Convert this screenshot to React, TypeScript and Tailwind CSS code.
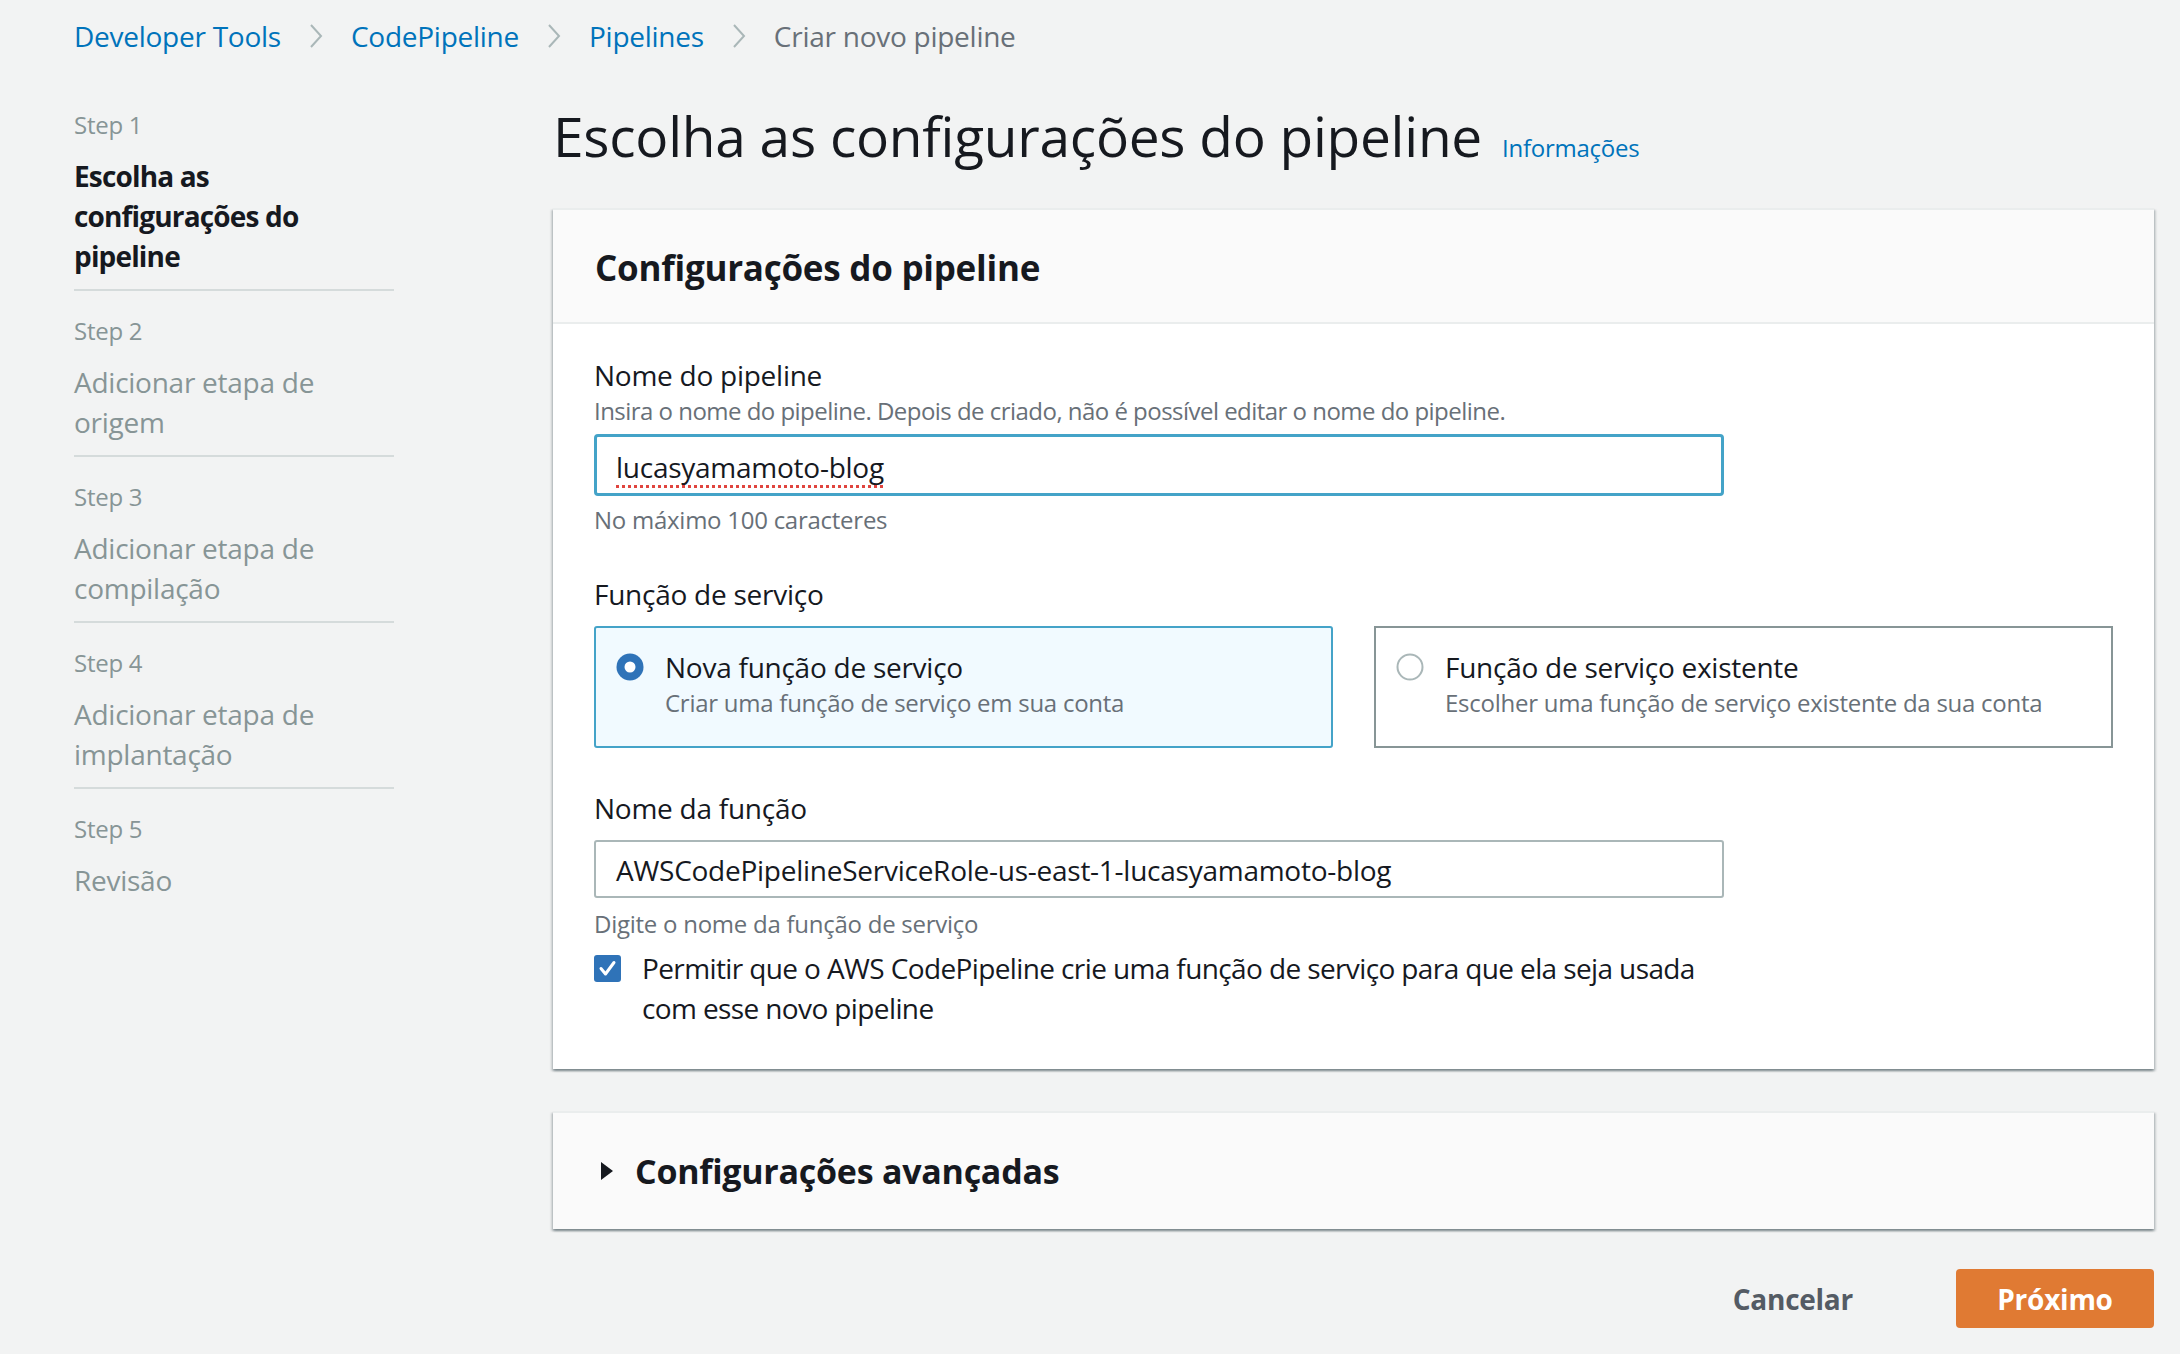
import React from "react";

const FONT = { fontFamily: '"Open Sans", "Noto Sans", Arial, sans-serif' };

function Chevron() {
  return (
    <svg width="16" height="28" viewBox="0 0 16 28" className="shrink-0">
      <path d="M3 3 L13 14 L3 25" fill="none" stroke="#aab7b8" strokeWidth="2" />
    </svg>
  );
}

const steps = [
  { label: "Step 1", title: "Escolha as configurações do pipeline", active: true },
  { label: "Step 2", title: "Adicionar etapa de origem", active: false },
  { label: "Step 3", title: "Adicionar etapa de compilação", active: false },
  { label: "Step 4", title: "Adicionar etapa de implantação", active: false },
  { label: "Step 5", title: "Revisão", active: false },
];

function RadioChecked() {
  return (
    <svg width="28" height="28" viewBox="0 0 28 28" className="shrink-0">
      <circle cx="14" cy="14" r="13.5" fill="#2f73b8" />
      <circle cx="14" cy="14" r="5.5" fill="#ffffff" />
    </svg>
  );
}

function RadioEmpty() {
  return (
    <svg width="28" height="28" viewBox="0 0 28 28" className="shrink-0">
      <circle cx="14" cy="14" r="12.5" fill="#ffffff" stroke="#aab7b8" strokeWidth="2" />
    </svg>
  );
}

function CheckboxChecked() {
  return (
    <svg width="27" height="27" viewBox="0 0 27 27" className="shrink-0">
      <rect x="0" y="0" width="27" height="27" rx="3" fill="#2f73b8" />
      <path d="M7 13.5 L11.5 19 L20 7.5" fill="none" stroke="#ffffff" strokeWidth="3" strokeLinecap="round" strokeLinejoin="round" />
    </svg>
  );
}

const CARD_SHADOW =
  "shadow-[0_2px_2px_0_rgba(0,28,36,0.3),2px_2px_2px_0_rgba(0,28,36,0.15),-2px_2px_2px_0_rgba(0,28,36,0.15)]";

export default function App() {
  return (
    <div
      style={FONT}
      className="w-full min-h-[1354px] bg-[#f2f3f3] pl-[74px] pr-[26px] pt-[16px] text-[#16191f] tracking-[-0.016em]"
    >
      {/* Breadcrumb */}
      <nav className="flex items-center gap-[27px] text-[28px] leading-[40px]">
        <a className="text-[#0073bb]">Developer Tools</a>
        <Chevron />
        <a className="text-[#0073bb]">CodePipeline</a>
        <Chevron />
        <a className="text-[#0073bb]">Pipelines</a>
        <Chevron />
        <span className="text-[#687078]">Criar novo pipeline</span>
      </nav>

      <div className="mt-[48px] flex items-start">
        {/* Sidebar */}
        <aside className="w-[320px] shrink-0 pt-[5px]">
          {steps.map((s, i) => (
            <div
              key={s.label}
              className={
                (i === 0 ? "" : "pt-[24px] ") +
                (i < steps.length - 1 ? "pb-[13px] border-b-2 border-[#d5dbdb]" : "")
              }
            >
              <div className="text-[24px] leading-[32px] text-[#879596]">{s.label}</div>
              <div
                className={
                  "mt-[15px] text-[28px] leading-[40px] " +
                  (s.active ? "font-bold text-[#16191f] tracking-[-0.03em]" : "text-[#879596]")
                }
              >
                {s.title}
              </div>
            </div>
          ))}
        </aside>

        {/* Main */}
        <main className="ml-[159px] flex-1 min-w-0">
          <div className="flex items-baseline">
            <h1 className="text-[55px] leading-[64px] font-normal text-[#16191f]">
              Escolha as configurações do pipeline
            </h1>
            <a className="ml-[20px] text-[24px] leading-[32px] text-[#0073bb]">Informações</a>
          </div>

          {/* Card 1 */}
          <section className={"mt-[40px] bg-white border-t-2 border-[#eaeded] " + CARD_SHADOW}>
            <div className="h-[114px] bg-[#fafafa] border-b-2 border-[#eaeded] px-[42px] pt-[4px] flex items-center">
              <h2 className="text-[35px] leading-[48px] font-bold text-[#16191f]">
                Configurações do pipeline
              </h2>
            </div>

            <div className="px-[41px] pt-[31px] pb-[41px]">
              {/* Nome do pipeline */}
              <div className="text-[28px] leading-[40px]">Nome do pipeline</div>
              <div className="text-[24px] leading-[32px] text-[#687078] tracking-[-0.022em]">
                Insira o nome do pipeline. Depois de criado, não é possível editar o nome do pipeline.
              </div>
              <div className="mt-[7px] w-[1130px] h-[62px] border-[3px] border-[#44a3c8] rounded-[4px] bg-white flex items-center pl-[19px] pt-[3px]">
                <span className="text-[28px] leading-[40px] underline decoration-dotted decoration-[#e0443e] decoration-[3px] underline-offset-[7px]">
                  lucasyamamoto-blog
                </span>
              </div>
              <div className="mt-[8px] text-[24px] leading-[32px] text-[#687078]">
                No máximo 100 caracteres
              </div>

              {/* Função de serviço */}
              <div className="mt-[38px] text-[28px] leading-[40px]">Função de serviço</div>
              <div className="mt-[12px] grid grid-cols-2 gap-[41px]">
                <div className="h-[122px] border-2 border-[#44a3c8] rounded-[3px] bg-[#f1faff] pl-[20px] pt-[19px]">
                  <div className="flex items-center gap-[21px]">
                    <RadioChecked />
                    <span className="text-[28px] leading-[40px]">Nova função de serviço</span>
                  </div>
                  <div className="pl-[49px] text-[24px] leading-[32px] text-[#687078]">
                    Criar uma função de serviço em sua conta
                  </div>
                </div>
                <div className="h-[122px] border-2 border-[#879596] bg-white pl-[20px] pt-[19px]">
                  <div className="flex items-center gap-[21px]">
                    <RadioEmpty />
                    <span className="text-[28px] leading-[40px]">Função de serviço existente</span>
                  </div>
                  <div className="pl-[49px] text-[24px] leading-[32px] text-[#687078]">
                    Escolher uma função de serviço existente da sua conta
                  </div>
                </div>
              </div>

              {/* Nome da função */}
              <div className="mt-[40px] text-[28px] leading-[40px]">Nome da função</div>
              <div className="mt-[12px] w-[1130px] h-[58px] border-2 border-[#aab7b8] rounded-[3px] bg-white flex items-center pl-[20px] pt-[2px]">
                <span className="text-[28px] leading-[40px]">
                  AWSCodePipelineServiceRole-us-east-1-lucasyamamoto-blog
                </span>
              </div>
              <div className="mt-[10px] text-[24px] leading-[32px] text-[#687078]">
                Digite o nome da função de serviço
              </div>

              <div className="mt-[8px] flex items-start gap-[21px]">
                <div className="pt-[7px]">
                  <CheckboxChecked />
                </div>
                <div className="text-[28px] leading-[40px] tracking-[-0.022em]">
                  <div className="whitespace-nowrap">
                    Permitir que o AWS CodePipeline crie uma função de serviço para que ela seja usada
                  </div>
                  <div>com esse novo pipeline</div>
                </div>
              </div>
            </div>
          </section>

          {/* Card 2 */}
          <section
            className={
              "mt-[42px] h-[118px] bg-[#fafafa] border-t-2 border-[#eaeded] flex items-center pl-[47px] " +
              CARD_SHADOW
            }
          >
            <svg width="14" height="20" viewBox="0 0 14 20" className="shrink-0">
              <polygon points="1,1 13,10 1,19" fill="#16191f" />
            </svg>
            <h2 className="ml-[21px] text-[34px] leading-[48px] font-bold text-[#16191f]">
              Configurações avançadas
            </h2>
          </section>

          {/* Buttons */}
          <div className="mt-[40px] flex justify-end items-center gap-[103px]">
            <button className="text-[28px] leading-[40px] font-bold text-[#545b64]">Cancelar</button>
            <button className="w-[198px] h-[59px] rounded-[4px] bg-[#e07a33] text-white text-[28px] leading-[40px] font-bold">
              Próximo
            </button>
          </div>
        </main>
      </div>
    </div>
  );
}
